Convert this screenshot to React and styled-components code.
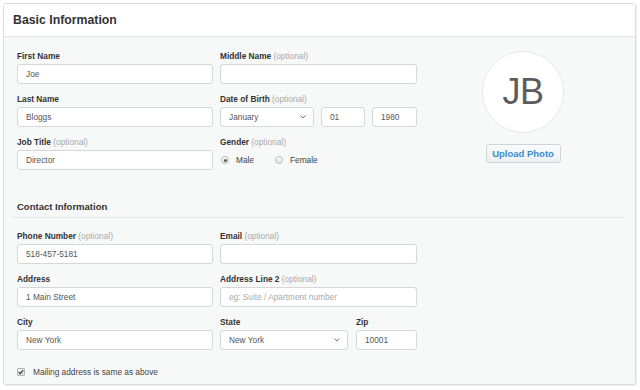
import React from "react";
import styled, { createGlobalStyle } from "styled-components";

const GlobalStyle = createGlobalStyle`
  body {
    margin: 0;
    background: #fff;
    font-family: "Liberation Sans", Arial, sans-serif;
  }
  * {
    box-sizing: border-box;
  }
`;

const Page = styled.div`
  padding: 3px;
`;

const Card = styled.div`
  width: 633px;
  border: 1px solid #dcdddd;
  border-radius: 3px;
  box-shadow: 1px 1px 0 #ededed;
  overflow: hidden;
`;

const Header = styled.div`
  height: 33px;
  display: flex;
  align-items: center;
  padding: 0 9px;
  background: #fff;
  border-bottom: 1px solid #e3e4e4;
`;

const Title = styled.h1`
  margin: 0;
  font-size: 12.3px;
  font-weight: 700;
  color: #333;
`;

const Body = styled.div`
  background: #f7f8f8;
  padding: 13px 9px 7px;
`;

const TopGrid = styled.div`
  display: grid;
  grid-template-columns: 196px 197px 1fr;
  column-gap: 7px;
  row-gap: 9px;
  padding: 0 4px;
`;

const FormGrid = styled.div`
  display: grid;
  grid-template-columns: 196px 197px;
  column-gap: 7px;
  row-gap: 9px;
  padding: 0 4px;
`;

const Field = styled.div`
  display: flex;
  flex-direction: column;
`;

const Label = styled.label`
  display: block;
  font-size: 8.3px;
  line-height: 13px;
  font-weight: 700;
  color: #333;
  margin-bottom: 1px;
  white-space: nowrap;
`;

const Optional = styled.span`
  font-weight: 400;
  color: #aaa;
`;

const Input = styled.input`
  width: 100%;
  height: 20px;
  padding: 0 8px;
  border: 1px solid #d6d7d7;
  border-radius: 3px;
  background: #fff;
  font-family: inherit;
  font-size: 8.3px;
  color: #555;
  outline: none;

  &::placeholder {
    color: #aaa;
  }
`;

const Select = styled.div`
  height: 20px;
  display: flex;
  align-items: center;
  justify-content: space-between;
  padding: 0 7px 0 8px;
  border: 1px solid #d6d7d7;
  border-radius: 3px;
  background: #fff;
  font-size: 8.3px;
  color: #555;
`;

const DateRow = styled.div`
  display: grid;
  grid-template-columns: 94px 44px 1fr;
  gap: 7px;
`;

const StateZipRow = styled.div`
  display: grid;
  grid-template-columns: 128px 1fr;
  gap: 8px;
`;

const RadioGroup = styled.div`
  height: 20px;
  display: flex;
  align-items: center;
  padding-left: 1px;
`;

const RadioOption = styled.span`
  display: flex;
  align-items: center;
  gap: 7px;
  font-size: 8.3px;
  color: #444;
  margin-right: ${(p) => (p.$last ? 0 : "21px")};
`;

const RadioDot = styled.span`
  width: 8px;
  height: 8px;
  border-radius: 50%;
  border: 1px solid #bdbdbd;
  background: linear-gradient(#fbfbfb, #e2e2e2);
  display: flex;
  align-items: center;
  justify-content: center;

  &::after {
    content: "";
    width: 3px;
    height: 3px;
    border-radius: 50%;
    background: ${(p) => (p.$checked ? "#555" : "transparent")};
  }
`;

const PhotoColumn = styled.div`
  grid-column: 3;
  grid-row: 1 / span 3;
  display: flex;
  flex-direction: column;
  align-items: center;
  padding-top: 1px;
`;

const Avatar = styled.div`
  width: 82px;
  height: 82px;
  border-radius: 50%;
  border: 1px solid #e6e6e6;
  background: #fff;
  display: flex;
  align-items: center;
  justify-content: center;
  font-size: 36px;
  color: #5c5c5c;
  letter-spacing: -0.5px;
`;

const UploadButton = styled.button`
  margin-top: 11px;
  width: 75px;
  height: 19px;
  padding: 0;
  border: 1px solid #cfd3d6;
  border-radius: 3px;
  background: linear-gradient(#fbfcfd, #edf0f3);
  font-family: inherit;
  font-size: 9.5px;
  font-weight: 700;
  color: #3b8dcb;
`;

const SectionTitle = styled.h2`
  margin: 31px 0 12px;
  padding: 0 4px 4px;
  font-size: 9.5px;
  line-height: 12px;
  font-weight: 700;
  color: #333;
  border-bottom: 1px solid #e6e7e7;
`;

const CheckRow = styled.div`
  margin-top: 17px;
  height: 10px;
  display: flex;
  align-items: center;
  gap: 8px;
  padding-left: 4px;
  font-size: 8.3px;
  color: #444;
`;

const CheckBox = styled.span`
  width: 8px;
  height: 8px;
  border: 1px solid #b5b5b5;
  border-radius: 1px;
  background: linear-gradient(#fafafa, #dcdcdc);
  display: flex;
  align-items: center;
  justify-content: center;
`;

const Chevron = () => (
  <svg width="6" height="4" viewBox="0 0 6 4">
    <path d="M0.5 0.5 L3 3 L5.5 0.5" fill="none" stroke="#777" strokeWidth="1" />
  </svg>
);

const Check = () => (
  <svg width="7" height="6" viewBox="0 0 7 6">
    <path d="M0.8 3.2 L2.6 5 L6.2 0.8" fill="none" stroke="#333" strokeWidth="1.4" />
  </svg>
);

const App = () => {
  return (
    <Page>
      <GlobalStyle />
      <Card>
        <Header>
          <Title>Basic Information</Title>
        </Header>
        <Body>
          <TopGrid>
            <Field>
              <Label>First Name</Label>
              <Input readOnly defaultValue="Joe" />
            </Field>
            <Field>
              <Label>
                Middle Name <Optional>(optional)</Optional>
              </Label>
              <Input readOnly defaultValue="" />
            </Field>
            <PhotoColumn>
              <Avatar>JB</Avatar>
              <UploadButton>Upload Photo</UploadButton>
            </PhotoColumn>
            <Field>
              <Label>Last Name</Label>
              <Input readOnly defaultValue="Bloggs" />
            </Field>
            <Field>
              <Label>
                Date of Birth <Optional>(optional)</Optional>
              </Label>
              <DateRow>
                <Select>
                  January
                  <Chevron />
                </Select>
                <Input readOnly defaultValue="01" />
                <Input readOnly defaultValue="1980" />
              </DateRow>
            </Field>
            <Field>
              <Label>
                Job Title <Optional>(optional)</Optional>
              </Label>
              <Input readOnly defaultValue="Director" />
            </Field>
            <Field>
              <Label>
                Gender <Optional>(optional)</Optional>
              </Label>
              <RadioGroup>
                <RadioOption>
                  <RadioDot $checked />
                  Male
                </RadioOption>
                <RadioOption $last>
                  <RadioDot />
                  Female
                </RadioOption>
              </RadioGroup>
            </Field>
          </TopGrid>

          <SectionTitle>Contact Information</SectionTitle>

          <FormGrid>
            <Field>
              <Label>
                Phone Number <Optional>(optional)</Optional>
              </Label>
              <Input readOnly defaultValue="518-457-5181" />
            </Field>
            <Field>
              <Label>
                Email <Optional>(optional)</Optional>
              </Label>
              <Input readOnly defaultValue="" />
            </Field>
            <Field>
              <Label>Address</Label>
              <Input readOnly defaultValue="1 Main Street" />
            </Field>
            <Field>
              <Label>
                Address Line 2 <Optional>(optional)</Optional>
              </Label>
              <Input readOnly placeholder="eg: Suite / Apartment number" />
            </Field>
            <Field>
              <Label>City</Label>
              <Input readOnly defaultValue="New York" />
            </Field>
            <StateZipRow>
              <Field>
                <Label>State</Label>
                <Select>
                  New York
                  <Chevron />
                </Select>
              </Field>
              <Field>
                <Label>Zip</Label>
                <Input readOnly defaultValue="10001" />
              </Field>
            </StateZipRow>
          </FormGrid>

          <CheckRow>
            <CheckBox>
              <Check />
            </CheckBox>
            Mailing address is same as above
          </CheckRow>
        </Body>
      </Card>
    </Page>
  );
};

export default App;
